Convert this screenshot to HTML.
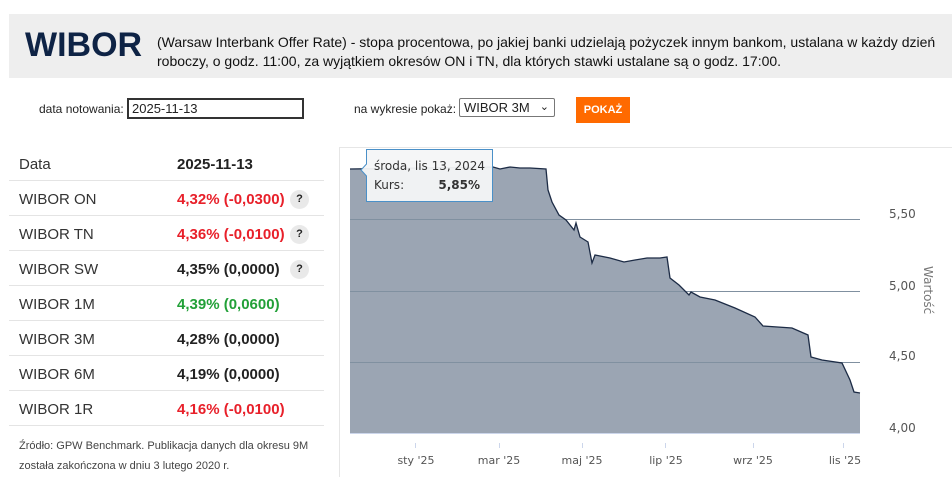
<!DOCTYPE html>
<html><head><meta charset="utf-8"><style>
*{margin:0;padding:0;box-sizing:border-box}
body{width:952px;height:477px;background:#fff;font-family:"Liberation Sans",Arial,sans-serif;position:relative;overflow:hidden;color:#222}
.a{position:absolute;white-space:nowrap}
.hdr{position:absolute;left:9px;top:14px;width:943px;height:64px;background:#eeeeee}
.logo{left:25px;top:26px;font-size:34px;font-weight:bold;color:#0e2345;letter-spacing:0px}
.desc{left:157px;top:33px;font-size:14px;line-height:19px;color:#111}
.row{position:absolute;left:9px;width:315px;height:35px;border-bottom:1px solid #e4e4e4;font-size:15px}
.row .n{position:absolute;left:10px;top:10px;color:#333}
.row .v{position:absolute;left:168px;top:10px;font-weight:bold}
.q{position:absolute;left:281px;top:9px;width:19px;height:19px;border-radius:50%;background:#e9e9e9;font-size:11px;font-weight:bold;text-align:center;line-height:19px;color:#222}
.red{color:#e8202a}.grn{color:#22a038}.blk{color:#222}
</style></head><body>
<div class="hdr"></div>
<div class="a logo">WIBOR</div>
<div class="a desc">(Warsaw Interbank Offer Rate) - stopa procentowa, po jakiej banki udzielają pożyczek innym bankom, ustalana w każdy dzień<br>roboczy, o godz. 11:00, za wyjątkiem okresów ON i TN, dla których stawki ustalane są o godz. 17:00.</div>

<div class="a" style="left:39px;top:102px;font-size:12px">data notowania:</div>
<div class="a" style="left:127px;top:98px;width:177px;height:21px;border:2px solid #333;font-size:13px;padding:1px 3px">2025-11-13</div>
<div class="a" style="left:354px;top:102px;font-size:12px">na wykresie pokaż:</div>
<div class="a" style="left:459px;top:98px;width:96px;height:19px;border:1px solid #777;border-radius:2px;font-size:13px;padding:0 4px;line-height:17px">WIBOR 3M<span style="position:absolute;right:5px;top:0;font-size:11px">&#8964;</span></div>
<div class="a" style="left:576px;top:97px;width:54px;height:26px;background:#ff6a00;color:#fff;font-size:11px;font-weight:bold;text-align:center;line-height:26px">POKAŻ</div>

<div class="row" style="top:146px"><span class="n">Data</span><span class="v blk">2025-11-13</span></div>
<div class="row" style="top:181px"><span class="n">WIBOR ON</span><span class="v red">4,32% (-0,0300)</span><span class="q">?</span></div>
<div class="row" style="top:216px"><span class="n">WIBOR TN</span><span class="v red">4,36% (-0,0100)</span><span class="q">?</span></div>
<div class="row" style="top:251px"><span class="n">WIBOR SW</span><span class="v blk">4,35% (0,0000)</span><span class="q">?</span></div>
<div class="row" style="top:286px"><span class="n">WIBOR 1M</span><span class="v grn">4,39% (0,0600)</span></div>
<div class="row" style="top:321px"><span class="n">WIBOR 3M</span><span class="v blk">4,28% (0,0000)</span></div>
<div class="row" style="top:356px"><span class="n">WIBOR 6M</span><span class="v blk">4,19% (0,0000)</span></div>
<div class="row" style="top:391px"><span class="n">WIBOR 1R</span><span class="v red">4,16% (-0,0100)</span></div>
<div class="a" style="left:19px;top:436px;font-size:11px;line-height:20px;color:#444">Źródło: GPW Benchmark. Publikacja danych dla okresu 9M<br>została zakończona w dniu 3 lutego 2020 r.</div>

<svg class="a" style="left:0;top:0" width="952" height="477">
<line x1="339.5" y1="147" x2="339.5" y2="477" stroke="#e6e6e6"/>
<line x1="339" y1="147.5" x2="952" y2="147.5" stroke="#e6e6e6"/>
<path d="M350,169 L493,167 L500,169 L510,167 L520,168 L530,168 L546,169 L548,190 L552,202 L559,215 L566,220 L574,230 L576,223 L580,237 L588,242 L592,263 L595,255 L610,258 L624,262 L635,260 L647,258 L660,258 L667,257 L670,278 L679,285 L689,295 L691,292 L700,297 L715,300 L735,308 L755,317 L763,326 L792,328 L808,335 L811,357 L822,360 L842,363 L850,380 L854,392 L860,393 L860,433 L350,433 Z" fill="#9ba5b3"/>
<g stroke="#8090a0" stroke-width="1"><line x1="350" y1="219.5" x2="860" y2="219.5"/><line x1="350" y1="291.5" x2="860" y2="291.5"/><line x1="350" y1="362.5" x2="860" y2="362.5"/></g>
<path d="M350,169 L493,167 L500,169 L510,167 L520,168 L530,168 L546,169 L548,190 L552,202 L559,215 L566,220 L574,230 L576,223 L580,237 L588,242 L592,263 L595,255 L610,258 L624,262 L635,260 L647,258 L660,258 L667,257 L670,278 L679,285 L689,295 L691,292 L700,297 L715,300 L735,308 L755,317 L763,326 L792,328 L808,335 L811,357 L822,360 L842,363 L850,380 L854,392 L860,393" fill="none" stroke="#1c2b45" stroke-width="1.3"/>
<line x1="350" y1="433.5" x2="860" y2="433.5" stroke="#ccd6eb"/>
<g stroke="#ccd6eb"><line x1="415.5" y1="443" x2="415.5" y2="448"/><line x1="499.5" y1="443" x2="499.5" y2="448"/><line x1="582.5" y1="443" x2="582.5" y2="448"/><line x1="665.5" y1="443" x2="665.5" y2="448"/><line x1="753.5" y1="443" x2="753.5" y2="448"/><line x1="843.5" y1="443" x2="843.5" y2="448"/></g>
<g font-family="DejaVu Sans, sans-serif" font-size="11" fill="#555" text-anchor="middle">
<text x="416" y="464">sty '25</text><text x="499" y="464">mar '25</text><text x="582" y="464">maj '25</text><text x="666" y="464">lip '25</text><text x="753" y="464">wrz '25</text><text x="845" y="464">lis '25</text></g>
<g font-family="DejaVu Sans, sans-serif" font-size="12" fill="#555">
<text x="889" y="218">5,50</text><text x="889" y="290">5,00</text><text x="889" y="360">4,50</text><text x="889" y="432">4,00</text></g>
<text transform="translate(924,266) rotate(90)" font-family="DejaVu Sans, sans-serif" font-size="12" fill="#777">Wartość</text>
<path d="M366.5,149.5 H492.5 V201.5 H366.5 V176 L361,170 L366.5,164 Z" fill="#f4f5f7" fill-opacity="0.95" stroke="#4a90c8"/>
<text x="374" y="170" font-family="DejaVu Sans, sans-serif" font-size="12" fill="#333">środa, lis 13, 2024</text>
<text x="374" y="189" font-family="DejaVu Sans, sans-serif" font-size="12" fill="#333">Kurs:</text>
<text x="480" y="189" text-anchor="end" font-family="DejaVu Sans, sans-serif" font-size="12" font-weight="bold" fill="#333">5,85%</text>
</svg>
</body></html>
